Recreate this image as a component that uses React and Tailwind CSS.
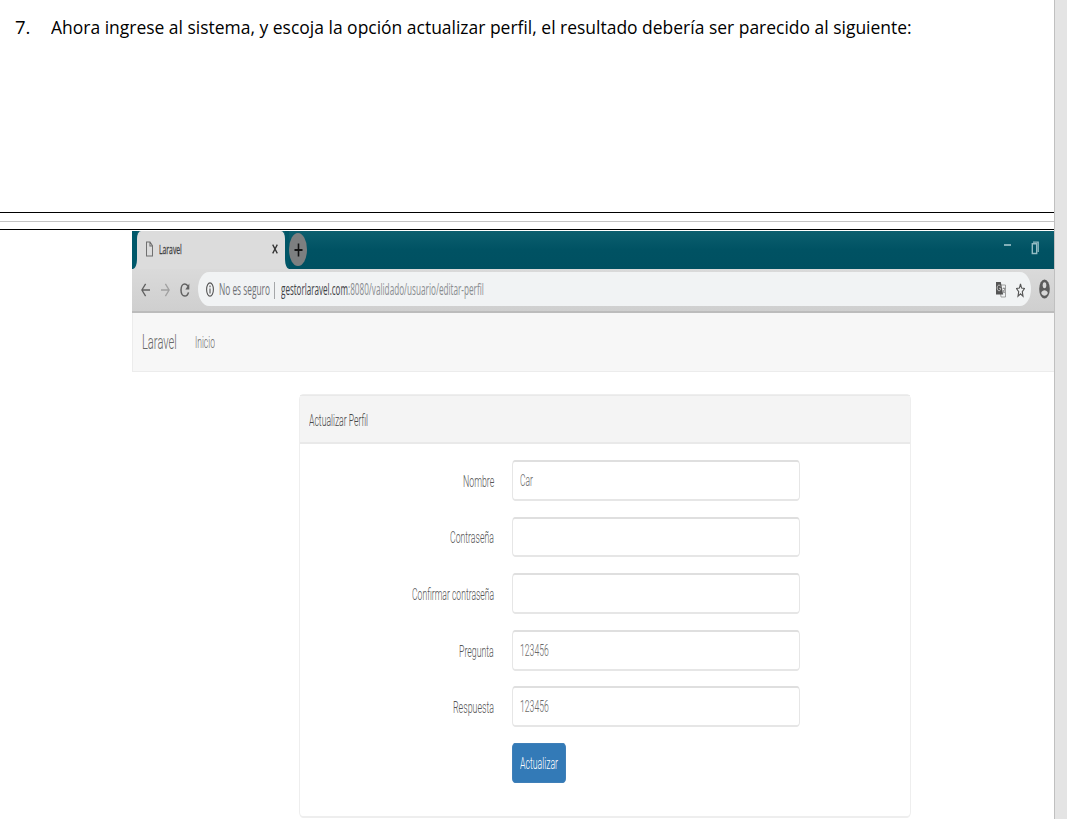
import { useLayoutEffect, useRef, useState } from "react";

// Condenses a line of text so that it fills exactly the given width.
function Fit({ width, className = "", children }) {
  const ref = useRef(null);
  const [scale, setScale] = useState(1);
  useLayoutEffect(() => {
    setScale(width / ref.current.offsetWidth);
  }, [width]);
  return (
    <span className="block shrink-0 whitespace-nowrap" style={{ width }}>
      <span
        ref={ref}
        className={`inline-block origin-left ${className}`}
        style={{ transform: `scaleX(${scale})` }}
      >
        {children}
      </span>
    </span>
  );
}

function TabStrip() {
  return (
    <div className="flex h-[38px] bg-gradient-to-b from-[#0d5f6f] via-[#005263] to-[#005061]">
      <div className="w-[5px] bg-[#d9d9d9]">
        <div className="h-full w-full rounded-br-[4px_10px] bg-[#00586a]" />
      </div>
      <div className="flex w-[148px] items-center rounded-t-[4px_8px] bg-[#dcdcdc] pb-[2px] pl-[9px]">
        <svg className="h-[16px] w-[7px]" viewBox="0 0 8 17" preserveAspectRatio="none" fill="none" stroke="#6c6c6c" strokeWidth="1.1">
          <path d="M.6 1h4L7.4 5v11H.6zM4.5 1v4.3h2.900" />
        </svg>
        <div className="ml-[6px]">
          <Fit width={23} className="font-['Open_Sans',sans-serif] text-[13px] leading-[18px] text-[#404040] [-webkit-text-stroke:0.3px_#404040]">
            Laravel
          </Fit>
        </div>
        <svg className="ml-[90px] h-[10px] w-[6px]" viewBox="0 0 6 10" stroke="#333" strokeWidth="1.3">
          <path d="M.7.6l4.6 8.800M5.300.6L.7 9.400" />
        </svg>
      </div>
      <div className="w-[4px] bg-[#d9d9d9]">
        <div className="h-full w-full rounded-bl-[4px_10px] bg-[#005667]" />
      </div>
      <div className="mt-[2px] flex h-[33px] w-[18px] items-center justify-center rounded-[50%] bg-[#7d7f80]">
        <svg className="h-[14px] w-[9px]" viewBox="0 0 9 14" stroke="#141414">
          <path d="M4.5.5v13" strokeWidth="1.6" />
          <path d="M.5 7h8" strokeWidth="2" />
        </svg>
      </div>
      <div className="ml-auto flex pr-[15px] pt-[10px]">
        <svg className="mt-[2px] h-[4px] w-[7px]" viewBox="0 0 7 4">
          <path d="M0 2h7" stroke="#a4c6cd" strokeWidth="1.6" />
        </svg>
        <svg className="ml-[20px] h-[14px] w-[8px]" viewBox="0 0 8 14" fill="none" stroke="#94bcc4">
          <path d="M1.300 2.800h4.400v9.700H1.300z" strokeWidth="1.400" />
          <path d="M2 1.200h5.200v9.800" strokeWidth="1.300" />
        </svg>
      </div>
    </div>
  );
}

function Toolbar() {
  return (
    <div className="flex h-[44px] border-b-2 border-[#bcbcbc] bg-gradient-to-b from-[#dadada] to-[#cfcfcf] pt-[3px]">
      <div className="flex h-[36px] w-[66px] items-center pl-[9px]">
        <svg className="h-[14px] w-[9px]" viewBox="0 0 9 14" fill="none" stroke="#606060" strokeWidth="1.3">
          <path d="M9 7H1M4.6.8L.9 7l3.700 6.200" />
        </svg>
        <svg className="ml-[11px] h-[14px] w-[9px]" viewBox="0 0 9 14" fill="none" stroke="#a0a0a0" strokeWidth="1.3">
          <path d="M0 7h8M4.400.8L8.100 7l-3.700 6.200" />
        </svg>
        <svg className="ml-[10px] h-[16px] w-[10px]" viewBox="0 0 10 16" fill="none">
          <path d="M8 4.300C7.200 2.700 6 2 4.800 2 2.600 2 1 4.700 1 8s1.600 6 3.800 6c1.800 0 3.200-1.500 3.700-3.700" stroke="#606060" strokeWidth="1.5" />
          <path d="M9.300 1.500v6H5.400z" fill="#606060" />
        </svg>
      </div>
      <div className="flex h-[34px] w-[833px] items-center rounded-[11px/17px] bg-[#f1f3f4] pl-[8px] pt-px">
        <svg className="h-[15px] w-[8px]" viewBox="0 0 8 15" fill="none" stroke="#555">
          <ellipse cx="4" cy="7.500" rx="3.400" ry="6.600" strokeWidth="1.100" />
          <path d="M4 3.500v1.700M4 6.500v5" strokeWidth="1.100" />
        </svg>
        <div className="ml-[5px] flex items-center pt-px">
          <Fit width={51} className="font-['Open_Sans',sans-serif] text-[16px] leading-[22px] text-[#707275]">
            No es seguro
          </Fit>
          <div className="ml-[4px] mr-[6px] h-[17px] w-px bg-[#a5a7a9]" />
          <Fit width={67} className="font-['Open_Sans',sans-serif] text-[16px] leading-[22px] text-[#404245]">
            gestorlaravel.com
          </Fit>
          <Fit width={136} className="font-['Open_Sans',sans-serif] text-[16px] leading-[22px] text-[#8a8d90]">
            :8080/validado/usuario/editar-perfil
          </Fit>
        </div>
        <svg className="ml-auto h-[17px] w-[10px]" viewBox="0 0 10 17">
          <path d="M3.500 4h6v12H5z" fill="#f1f3f4" stroke="#8a8a8a" strokeWidth=".8" />
          <path d="M0 1h4.800l2.400 12.500H0z" fill="#555" />
          <path d="M4.600 5.300C4 4.200 3.200 4 2.600 4.200 1.500 4.600 1.100 6 1.300 7.600c.3 1.900 1.500 2.700 2.500 2 .7-.5.9-1.400.9-2.300H3.100" fill="none" stroke="#ddd" strokeWidth=".8" />
          <path d="M6.600 7.500h2.600M7.900 6.300v1.200M8.800 7.500c-.3 2-1 3.500-1.900 4.800M7.200 9c.4 1.400 1 2.400 1.700 3.200" fill="none" stroke="#777" strokeWidth=".7" />
        </svg>
        <svg className="ml-[10px] mr-[6px] h-[16px] w-[9px]" viewBox="0 0 9 16" fill="none" stroke="#555" strokeWidth="1.100">
          <path d="M4.500 1.800l1.100 4.300 2.900.4-2.200 3.200.7 4.600-2.500-2.500L2 14.300l.7-4.600L.5 6.500l2.900-.4z" />
        </svg>
      </div>
      <svg className="ml-[8px] mt-[7px] h-[20px] w-[11px]" viewBox="0 0 11 20">
        <ellipse cx="5.500" cy="10" rx="5.300" ry="9.500" fill="#5c5c5c" />
        <ellipse cx="5.500" cy="6.300" rx="1.800" ry="3" fill="#d8d8d8" />
        <path d="M2.200 14c.3-2 2-2.800 3.300-2.800S8.500 12 8.800 14c-.7 1.700-1.900 2.700-3.300 2.700S2.900 15.700 2.200 14z" fill="#d8d8d8" />
      </svg>
    </div>
  );
}

const FIELDS = [
  { label: "Nombre", width: 31, value: "Car", valueWidth: 13, box: "h-[41px]", gap: "mb-[16px]" },
  { label: "Contraseña", width: 44, box: "h-[40px]", gap: "mb-[16px]" },
  { label: "Confirmar contraseña", width: 82, box: "h-[41px]", gap: "mb-[16px]" },
  { label: "Pregunta", width: 35, value: "123456", valueWidth: 29, box: "h-[41px]", gap: "mb-[15px]" },
  { label: "Respuesta", width: 41, value: "123456", valueWidth: 29, box: "h-[41px]", gap: "mb-[16px]" },
];

function Field({ field }) {
  return (
    <div className={`flex items-center ${field.box} ${field.gap}`}>
      <div className="flex w-[194px] justify-end pt-px">
        <Fit width={field.width} className="text-[17px] font-light leading-[24px] text-[#555555]">
          {field.label}
        </Fit>
      </div>
      <div className="ml-[18px] flex h-full w-[288px] items-center rounded-[3px/5px] border border-b-2 border-t-2 border-[#e6e6e6] border-t-[#dfdfdf] bg-white pl-[7px]">
        {field.value && (
          <Fit width={field.valueWidth} className="text-[17px] font-light leading-[24px] text-[#686868]">
            {field.value}
          </Fit>
        )}
      </div>
    </div>
  );
}

export default function App() {
  return (
    <div className="flex h-[819px] w-[1067px] overflow-hidden bg-[#e4e4e4] font-[Roboto,sans-serif]">
      <div className="flex w-[1055px] shrink-0 flex-col border-r border-[#c0c0c0] bg-white">
        <div className="flex h-[212px] pl-[15px] pt-[14px] font-['Open_Sans',sans-serif] text-[18.5px] leading-[26px] text-black">
          <Fit width={15}>7.</Fit>
          <div className="ml-[21px]">
            <Fit width={861}>
              Ahora ingrese al sistema, y escoja la opción actualizar perfil, el resultado debería ser parecido al siguiente:
            </Fit>
          </div>
        </div>
        <div className="h-px bg-black" />
        <div className="mt-[8px] h-px bg-[#c4c4c4]" />
        <div className="mt-[7px] h-px bg-black" />
        <div className="ml-[132px] mt-px flex flex-col">
          <TabStrip />
          <Toolbar />
          <div className="flex h-[59px] items-center border-b border-l border-[#ececec] bg-[#f7f7f7] pl-[9px]">
            <Fit width={35} className="text-[21px] font-light leading-[28px] text-[#686868]">
              Laravel
            </Fit>
            <div className="ml-[18px] pt-px">
              <Fit width={20} className="text-[17px] font-light leading-[24px] text-[#6c6c6c]">
                Inicio
              </Fit>
            </div>
          </div>
          <div className="ml-[167px] mt-[22px] h-[424px] w-[612px] rounded-[4px/6px] border border-b-2 border-[#eeeeee] bg-white">
            <div className="flex h-[49px] items-center border-b-2 border-t border-[#e9e9e9] bg-[#f4f4f4] pl-[9px] pt-[2px]">
              <Fit width={59} className="text-[17px] font-light leading-[24px] text-[#484848]">
                Actualizar Perfil
              </Fit>
            </div>
            <div className="pt-[16px]">
              {FIELDS.map((field) => (
                <Field key={field.label} field={field} />
              ))}
              <button className="ml-[212px] flex h-[40px] w-[54px] items-center rounded-[3px/5px] border border-[#3f7fb8] bg-[#337ab7] pl-[7px] pt-px">
                <Fit width={38} className="text-[17px] font-light leading-[24px] text-white">
                  Actualizar
                </Fit>
              </button>
            </div>
          </div>
        </div>
      </div>
    </div>
  );
}
